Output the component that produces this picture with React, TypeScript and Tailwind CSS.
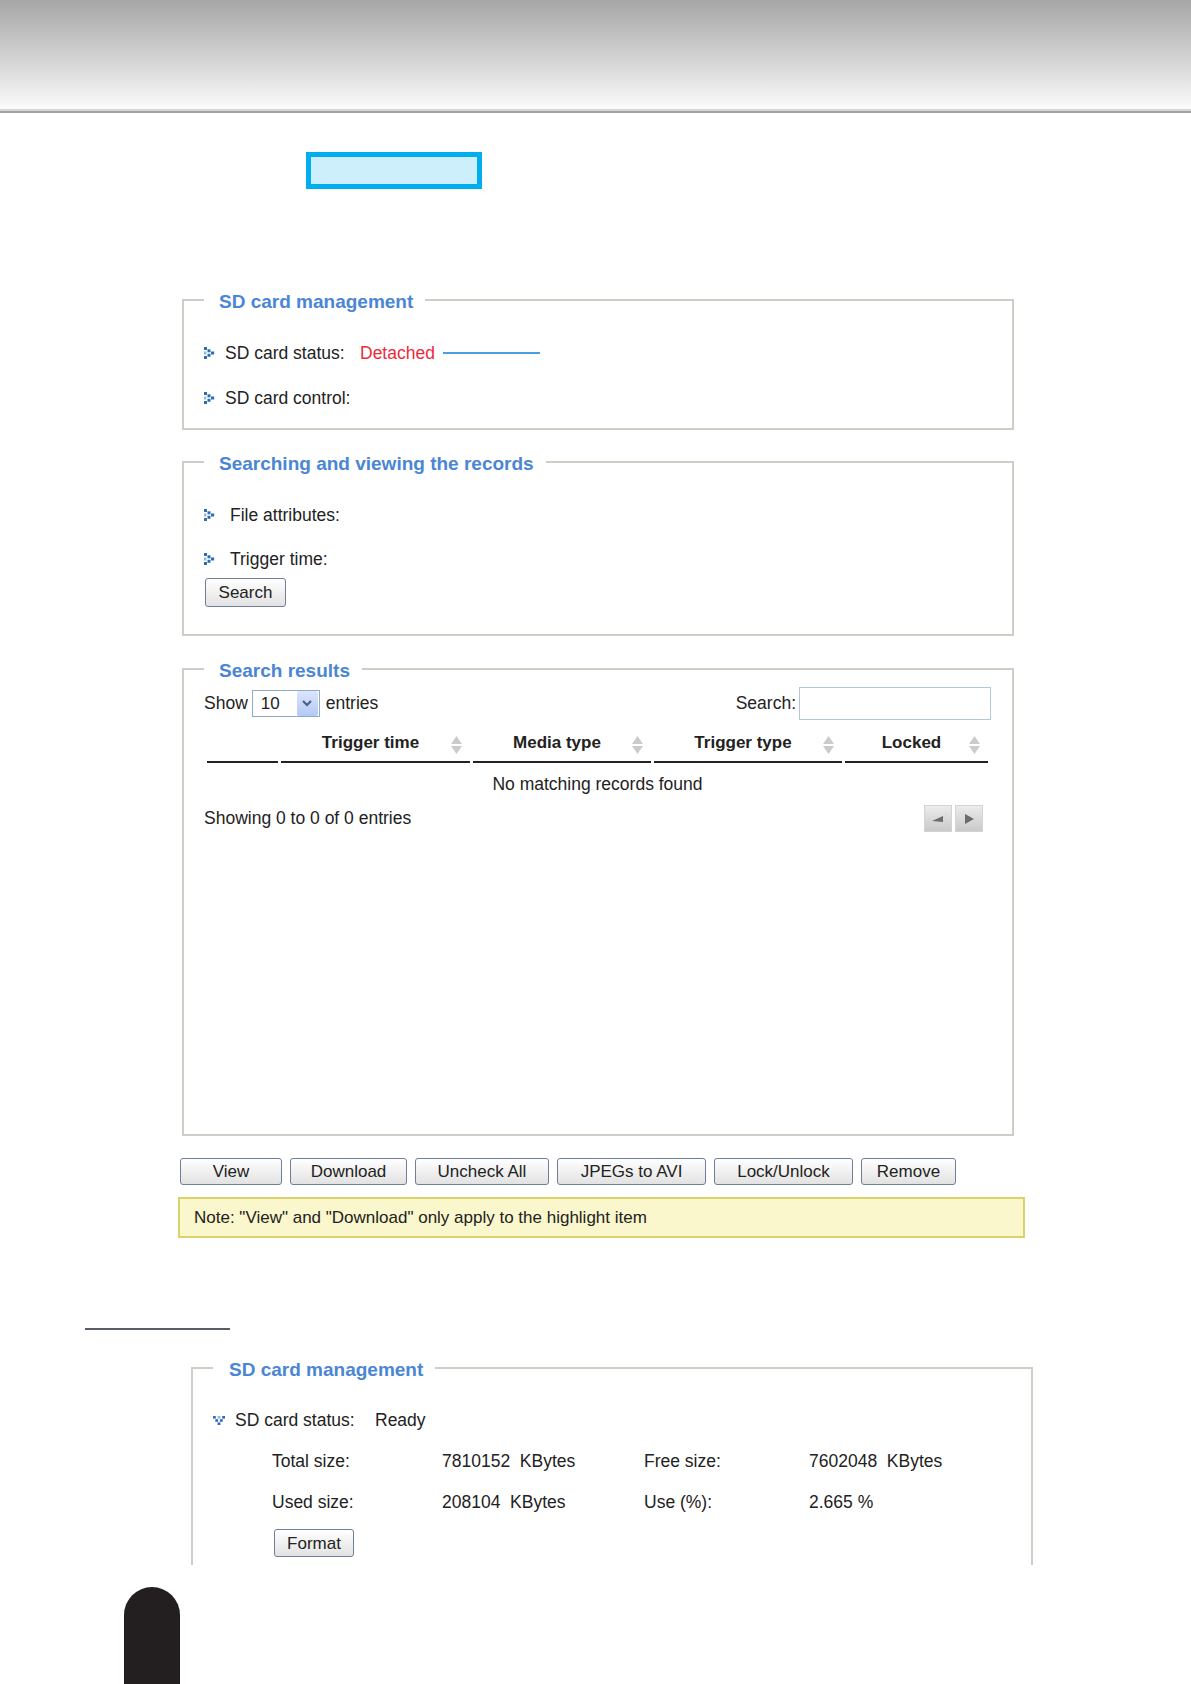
import React from 'react';

const font = "font-['Liberation_Sans',Arial,sans-serif]";

function Arrow() {
    // dotted chevron bullet
    return (
        <svg width="11" height="12" viewBox="0 0 11 12" className="shrink-0">
            <g fill="#2d6db8">
                <rect x="0" y="0" width="3" height="3" />
                <rect x="3.5" y="2.3" width="3" height="3" />
                <rect x="7" y="4.5" width="3.2" height="3" />
                <rect x="3.5" y="6.8" width="3" height="3" />
                <rect x="0" y="9" width="3" height="3" />
                <rect x="0" y="4.5" width="2.4" height="3" fill="#8db8e6" />
            </g>
        </svg>
    );
}

function ArrowDown() {
    return (
        <svg width="12" height="9" viewBox="0 0 12 9" className="shrink-0">
            <g fill="#2d6db8">
                <rect x="0" y="0" width="2.8" height="2.6" />
                <rect x="4.6" y="0" width="2.8" height="2.6" fill="#8db8e6" />
                <rect x="9.2" y="0" width="2.8" height="2.6" />
                <rect x="2.3" y="3.2" width="2.8" height="2.6" />
                <rect x="6.9" y="3.2" width="2.8" height="2.6" />
                <rect x="4.6" y="6.4" width="2.8" height="2.6" />
            </g>
        </svg>
    );
}

function SortIcon() {
    return (
        <svg width="11" height="18" viewBox="0 0 11 18" className="absolute right-[8px] top-1/2 -translate-y-1/2">
            <polygon points="0,8 5.5,0 11,8" fill="#cbcbcb" />
            <polygon points="0,10 5.5,18 11,10" fill="#cbcbcb" />
        </svg>
    );
}

function Btn({ children, className = '' }: { children: React.ReactNode; className?: string }) {
    return (
        <button
            type="button"
            className={`h-[27px] rounded-[3px] border border-[#6f7f9b] bg-linear-to-b from-[#ffffff] to-[#e2e2e2] text-[17px] leading-none text-[#222] ${className}`}
        >
            {children}
        </button>
    );
}

function Legend({ children, pl = 'pl-[15px]' }: { children: React.ReactNode; pl?: string }) {
    return (
        <legend className={`${pl} pr-[12px] text-[19px] leading-[22px] font-bold text-[#4a86d4]`}>
            <span className="relative top-[2px]">{children}</span>
        </legend>
    );
}

export default function App() {
    return (
        <div className={`${font} h-[1684px] w-full overflow-hidden bg-white text-[17.5px] text-[#222]`}>
            {/* Header band */}
            <div className="h-[109px] bg-linear-to-b from-[#a6a6a6] to-[#fbfbfb]" />
            <div className="h-[2px] bg-[#d6d6d6]" />
            <div className="h-[2px] bg-[#a3a3a3]" />

            {/* Highlight box */}
            <div className="ml-[306px] mt-[39px] h-[37px] w-[176px] border-[5px] border-[#00aeef] bg-[#cdeefb]" />

            {/* SD card management */}
            <fieldset className="ml-[182px] mt-[100px] w-[832px] border-2 border-[#cfcdc5] px-[20px] pt-[31px] pb-[19px]">
                <Legend>SD card management</Legend>
                <div className="flex h-[22px] items-center leading-[22px]">
                    <Arrow />
                    <span className="ml-[10px] w-[135px]">SD card status:</span>
                    <span className="text-[#ec2a3c]">Detached</span>
                    <span className="ml-[8px] h-[2px] w-[97px] bg-[#4a9fe3]" />
                </div>
                <div className="mt-[23px] flex h-[22px] items-center leading-[22px]">
                    <Arrow />
                    <span className="ml-[10px]">SD card control:</span>
                </div>
            </fieldset>

            {/* Searching and viewing the records */}
            <fieldset className="ml-[182px] mt-[21px] w-[832px] border-2 border-[#cfcdc5] px-[20px] pt-[31px] pb-[27px]">
                <Legend>Searching and viewing the records</Legend>
                <div className="flex h-[22px] items-center leading-[22px]">
                    <Arrow />
                    <span className="ml-[15px]">File attributes:</span>
                </div>
                <div className="mt-[22px] flex h-[22px] items-center leading-[22px]">
                    <Arrow />
                    <span className="ml-[15px]">Trigger time:</span>
                </div>
                <Btn className="mt-[8px] ml-[1px] h-[29px] w-[81px]">Search</Btn>
            </fieldset>

            {/* Search results */}
            <fieldset className="ml-[182px] mt-[22px] w-[832px] border-2 border-[#cfcdc5] pl-[20px] pr-[21px] pt-[7px] pb-[302px]">
                <Legend>Search results</Legend>
                <div className="flex h-[33px] items-center justify-between">
                    <div className="flex items-center">
                        <span>Show</span>
                        <div className="ml-[4px] flex h-[27px] w-[68px] items-center border border-[#8fa9c9] bg-white pl-[8px]">
                            <span className="flex-1 text-[17px]">10</span>
                            <span className="mr-[1px] flex h-[25px] w-[21px] items-center justify-center rounded-[2px] bg-linear-to-b from-[#dbe6fd] to-[#b4c8f4]">
                                <svg width="10" height="7" viewBox="0 0 10 7">
                                    <polyline points="1,1 5,5 9,1" fill="none" stroke="#4d5f86" strokeWidth="2.2" />
                                </svg>
                            </span>
                        </div>
                        <span className="ml-[6px]">entries</span>
                    </div>
                    <div className="flex items-center">
                        <span>Search:</span>
                        <div className="ml-[3px] h-[33px] w-[192px] border border-[#b4c6dc] bg-white" />
                    </div>
                </div>

                <table className="mt-[9px] w-[787px] table-fixed border-separate border-spacing-x-[3px] border-spacing-y-0">
                    <colgroup>
                        <col className="w-[71px]" />
                        <col className="w-[189px]" />
                        <col className="w-[178px]" />
                        <col className="w-[188px]" />
                        <col className="w-[143px]" />
                    </colgroup>
                    <thead>
                        <tr className="text-[17px] font-bold leading-[22px]">
                            <th className="border-b-2 border-[#222] pt-[3px] pb-[7px]" />
                            <th className="relative border-b-2 border-[#222] pt-[3px] pb-[7px] pl-[10px] pr-[20px] text-center">
                                Trigger time
                                <SortIcon />
                            </th>
                            <th className="relative border-b-2 border-[#222] pt-[3px] pb-[7px] pl-[10px] pr-[20px] text-center">
                                Media type
                                <SortIcon />
                            </th>
                            <th className="relative border-b-2 border-[#222] pt-[3px] pb-[7px] pl-[10px] pr-[20px] text-center">
                                Trigger type
                                <SortIcon />
                            </th>
                            <th className="relative border-b-2 border-[#222] pt-[3px] pb-[7px] pl-[10px] pr-[20px] text-center">
                                Locked
                                <SortIcon />
                            </th>
                        </tr>
                    </thead>
                    <tbody>
                        <tr>
                            <td colSpan={5} className="pt-[10px] pb-[6px] text-center leading-[22px]">
                                No matching records found
                            </td>
                        </tr>
                    </tbody>
                </table>

                <div className="mt-[4px] flex h-[27px] items-center justify-between">
                    <span>Showing 0 to 0 of 0 entries</span>
                    <div className="mr-[8px] flex gap-[3px]">
                        <span className="flex h-[27px] w-[28px] items-center justify-center border border-[#d4d4d4] bg-linear-to-b from-[#ececec] to-[#c9c9c9]">
                            <svg width="14" height="12" viewBox="0 0 14 12">
                                <polygon points="1,8 12,3 12,9" fill="#6c6c6c" />
                            </svg>
                        </span>
                        <span className="flex h-[27px] w-[28px] items-center justify-center border border-[#d4d4d4] bg-linear-to-b from-[#ececec] to-[#c9c9c9]">
                            <svg width="12" height="12" viewBox="0 0 12 12">
                                <polygon points="2,1 11,6 2,11" fill="#6c6c6c" />
                            </svg>
                        </span>
                    </div>
                </div>
            </fieldset>

            {/* Action buttons */}
            <div className="ml-[180px] mt-[22px] flex gap-[8px]">
                <Btn className="w-[102px]">View</Btn>
                <Btn className="w-[117px]">Download</Btn>
                <Btn className="w-[134px]">Uncheck All</Btn>
                <Btn className="w-[149px]">JPEGs to AVI</Btn>
                <Btn className="w-[139px]">Lock/Unlock</Btn>
                <Btn className="w-[95px]">Remove</Btn>
            </div>

            <div className="ml-[178px] mt-[12px] flex h-[41px] w-[847px] items-center border-2 border-[#dcd26a] bg-[#faf7cc] pl-[14px] text-[17px]">
                Note: "View" and "Download" only apply to the highlight item
            </div>

            <div className="ml-[85px] mt-[90px] h-[2px] w-[145px] bg-[#575c68]" />

            {/* SD card management (ready) */}
            <fieldset className="ml-[191px] mt-[27px] w-[842px] border-2 border-b-0 border-[#cfcdc5] px-[20px] pt-[30px] pb-[8px]">
                <Legend pl="pl-[16px]">SD card management</Legend>
                <div className="flex h-[22px] items-center leading-[22px]">
                    <ArrowDown />
                    <span className="ml-[10px] w-[140px]">SD card status:</span>
                    <span>Ready</span>
                </div>
                <div className="ml-[59px] mt-[19px] grid grid-cols-[170px_202px_165px_1fr] leading-[22px]">
                    <span>Total size:</span>
                    <span>7810152&nbsp; KBytes</span>
                    <span>Free size:</span>
                    <span>7602048&nbsp; KBytes</span>
                </div>
                <div className="ml-[59px] mt-[19px] grid grid-cols-[170px_202px_165px_1fr] leading-[22px]">
                    <span>Used size:</span>
                    <span>208104&nbsp; KBytes</span>
                    <span>Use (%):</span>
                    <span>2.665 %</span>
                </div>
                <Btn className="ml-[61px] mt-[16px] h-[28px] w-[80px]">Format</Btn>
            </fieldset>

            <div className="ml-[124px] mt-[22px] h-[97px] w-[56px] rounded-t-[28px] bg-[#231f20]" />
        </div>
    );
}
